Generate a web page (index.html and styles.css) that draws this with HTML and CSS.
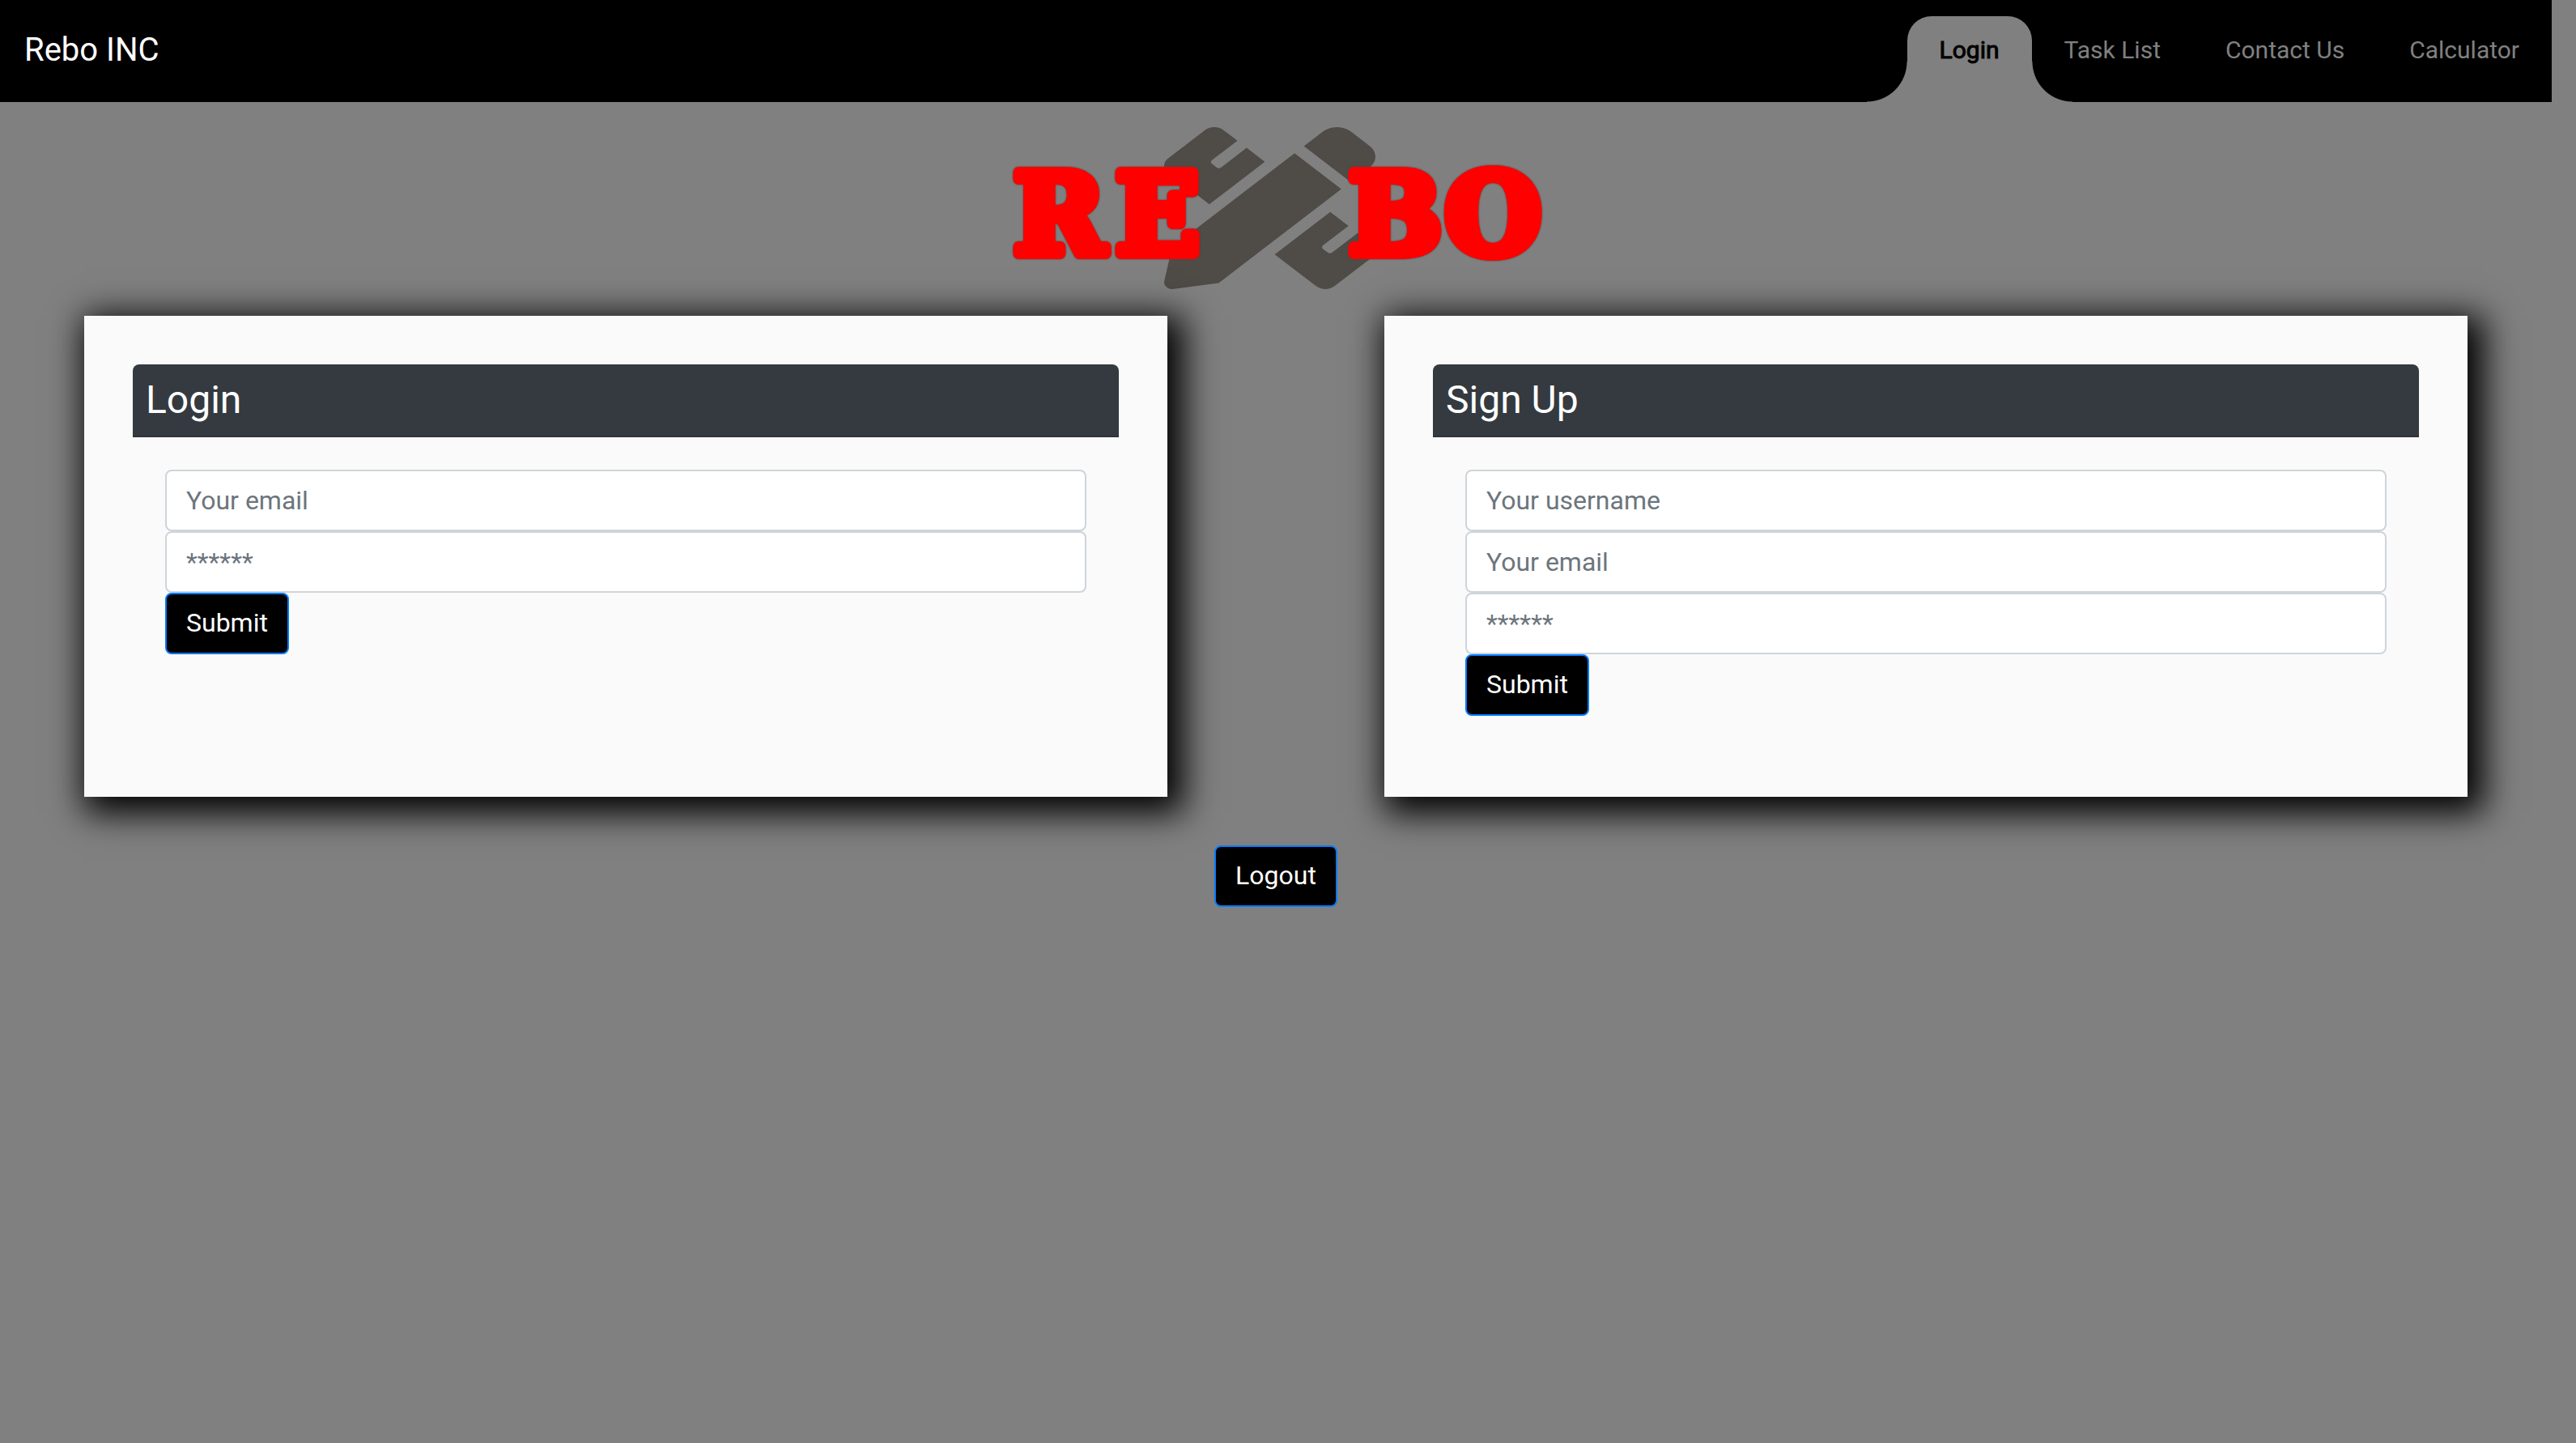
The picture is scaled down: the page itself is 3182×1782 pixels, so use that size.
FILE: index.html
```html
<!DOCTYPE html>
<html lang="en">
<head>
  <meta charset="utf-8">
  <meta name="viewport" content="width=device-width, initial-scale=1">
  <title>Rebo INC</title>
  <link rel="stylesheet" href="styles.css">
</head>
<body>
  <nav class="navbar">
    <a class="brand" href="#">Rebo INC</a>
    <ul class="nav-list">
      <li><a class="nav-link active" href="#" aria-current="page">Login</a></li>
      <li><a class="nav-link" href="#">Task List</a></li>
      <li><a class="nav-link" href="#">Contact Us</a></li>
      <li><a class="nav-link" href="#">Calculator</a></li>
    </ul>
  </nav>

  <header class="logo">
    <svg class="logo-art" viewBox="0 0 664 206" role="img" aria-label="Rebo">
      <svg x="194" y="3" width="261" height="200" viewBox="0 0 512 512" preserveAspectRatio="none">
        <path class="logo-tools" d="M109.46 244.04l134.58-134.56-44.12-44.12-61.68 61.68a7.919 7.919 0 0 1-11.21 0l-11.21-11.21c-3.1-3.1-3.1-8.12 0-11.21l61.68-61.68-33.64-33.65C131.47-3.1 111.39-3.1 99 9.29L9.29 99c-12.38 12.39-12.39 32.47 0 44.86l100.17 100.18zm388.47-116.8c18.76-18.76 18.75-49.17 0-67.93l-45.25-45.25c-18.76-18.76-49.18-18.76-67.95 0l-46.02 46.01 113.2 113.2 46.02-46.03zM316.08 82.71l-297 296.96L.32 487.11c-2.53 14.49 10.09 27.11 24.59 24.56l107.45-18.84L429.28 195.9 316.08 82.71zm186.63 285.43l-33.64-33.64-61.68 61.68c-3.1 3.1-8.12 3.1-11.21 0l-11.21-11.21c-3.09-3.1-3.09-8.12 0-11.21l61.68-61.68-44.14-44.14L267.93 402.5l100.21 100.2c12.39 12.39 32.47 12.39 44.86 0l89.71-89.7c12.39-12.39 12.39-32.47 0-44.86z"/>
      </svg>
      <text class="logo-text" x="8 134" y="159">RE</text>
      <text class="logo-text" x="422 541" y="159">BO</text>
    </svg>
  </header>

  <main>
    <div class="cards">
      <section class="card">
        <h3 class="card-header">Login</h3>
        <form class="card-body">
          <input class="field" type="email" placeholder="Your email" aria-label="Your email">
          <input class="field" type="password" placeholder="******" aria-label="Password">
          <button class="btn" type="button">Submit</button>
        </form>
      </section>
      <section class="card">
        <h3 class="card-header">Sign Up</h3>
        <form class="card-body">
          <input class="field" type="text" placeholder="Your username" aria-label="Your username">
          <input class="field" type="email" placeholder="Your email" aria-label="Your email">
          <input class="field" type="password" placeholder="******" aria-label="Password">
          <button class="btn" type="button">Submit</button>
        </form>
      </section>
    </div>
    <div class="logout">
      <button class="btn" type="button">Logout</button>
    </div>
  </main>
</body>
</html>
```
FILE: styles.css
```css
*,
*::before,
*::after {
  box-sizing: border-box;
}

body {
  margin: 0;
  padding-right: 30px;
  background: #808080;
  color: #212529;
  font-family: Roboto, "Liberation Sans", sans-serif;
  font-size: 32px;
  line-height: 48px;
}

.navbar {
  display: flex;
  justify-content: space-between;
  padding-top: 20px;
  background: #000;
}

.brand {
  padding: 12px 30px;
  color: #fff;
  font-size: 40px;
  line-height: 60px;
  text-decoration: none;
}

.nav-list {
  display: flex;
  margin: 0;
  padding: 0;
  list-style: none;
}

.nav-link {
  display: block;
  position: relative;
  padding: 20px 40px 42px;
  color: #808080;
  font-size: 30px;
  line-height: 44px;
  text-decoration: none;
}

.nav-link.active {
  border-radius: 30px 30px 0 0;
  background: #808080;
  color: #000;
  -webkit-text-stroke: 1px #000;
}

/* Concave feet on both sides of the selected tab */
.nav-link.active::before,
.nav-link.active::after {
  content: "";
  position: absolute;
  bottom: 0;
  width: 50px;
  height: 50px;
}

.nav-link.active::before {
  right: 100%;
  background: radial-gradient(circle at 0 0, #000 49px, #808080 50px);
}

.nav-link.active::after {
  left: 100%;
  background: radial-gradient(circle at 100% 0, #000 49px, #808080 50px);
}

.logo {
  display: flex;
  justify-content: center;
  padding: 28px 0 30px;
}

.logo-art {
  display: block;
  width: 664px;
  max-width: 100%;
}

.logo-tools {
  fill: #4f4b47;
}

.logo-text {
  fill: #f00;
  stroke: #f00;
  stroke-width: 14px;
  stroke-linejoin: round;
  font-family: "DejaVu Serif", serif;
  font-size: 136px;
  font-weight: 700;
  filter: drop-shadow(0 0 1px #444);
}

.cards {
  display: grid;
  grid-template-columns: 1fr 1fr;
  gap: 268px;
  padding: 0 104px;
}

.card {
  padding: 60px;
  background: #fafafa;
  box-shadow: 10px 10px 40px 10px #000;
}

.card-header {
  margin: 0;
  padding: 14px 16px;
  border-bottom: 2px solid #2e3338;
  border-radius: 8px 8px 0 0;
  background: #343a40;
  color: #fff;
  font-size: 48px;
  font-weight: 400;
  line-height: 60px;
}

.card-body {
  padding: 40px;
}

.field {
  display: block;
  width: 100%;
  height: 76px;
  padding: 12px 24px;
  border: 2px solid #ced4da;
  border-radius: 8px;
  background: #fff;
  color: #495057;
  font: inherit;
}

.field::placeholder {
  color: #6c757d;
  opacity: 1;
}

.btn {
  display: block;
  height: 76px;
  padding: 11px 24px 13px;
  border: 2px solid #007bff;
  border-radius: 8px;
  background: #000;
  color: #fff;
  font: inherit;
}

.logout {
  display: flex;
  justify-content: center;
  padding: 60px 0;
}
```
